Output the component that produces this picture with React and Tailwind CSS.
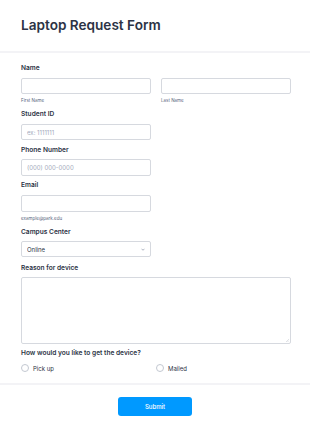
import React, { useState } from "react";

const labelCls = "block text-[6.6px] leading-[10px] font-semibold text-[#2c3345]";
const inputCls =
  "block h-[16px] rounded-[2px] border border-[#d6d9df] bg-white px-[5px] text-[6px] text-[#2c3345] placeholder:text-[#a3aabb] outline-none";
const subCls = "block text-[4.5px] leading-[7px] text-[#57647e]";

const App = () => {
  const [method, setMethod] = useState("");

  return (
    <div
      className="w-[310px] h-[432px] bg-white overflow-hidden"
      style={{ fontFamily: "Inter, 'Liberation Sans', sans-serif" }}
    >
      {/* Header */}
      <div className="pt-[16px] pb-[17px] pl-[21px]">
        <h1 className="text-[13.6px] leading-[18px] font-semibold text-[#2c3345]">
          Laptop Request Form
        </h1>
      </div>
      <div className="h-[2px] bg-[#f3f3f6]" />

      <div className="ml-[21px] w-[270px] pt-[10px]">
        {/* Name */}
        <label className={labelCls}>Name</label>
        <div className="mt-[5px] grid grid-cols-2 gap-[10px]">
          <div>
            <input className={`${inputCls} w-full`} />
            <span className={`${subCls} mt-[3px]`}>First Name</span>
          </div>
          <div>
            <input className={`${inputCls} w-full`} />
            <span className={`${subCls} mt-[3px]`}>Last Name</span>
          </div>
        </div>

        {/* Student ID */}
        <label className={`${labelCls} mt-[5px]`}>Student ID</label>
        <input className={`${inputCls} mt-[5px] w-[130px]`} placeholder="ex: 1111111" />

        {/* Phone */}
        <label className={`${labelCls} mt-[5px]`}>Phone Number</label>
        <input
          className={`${inputCls} mt-[4px] w-[130px] h-[17px]`}
          placeholder="(000) 000-0000"
        />

        {/* Email */}
        <label className={`${labelCls} mt-[4px]`}>Email</label>
        <input className={`${inputCls} mt-[5px] w-[130px] h-[17px]`} />
        <span className={`${subCls} mt-[3px]`}>example@park.edu</span>

        {/* Campus */}
        <label className={`${labelCls} mt-[5px]`}>Campus Center</label>
        <div className="relative mt-[4px] w-[130px]">
          <select
            className={`${inputCls} w-full appearance-none text-[6.5px]`}
            defaultValue="Online"
          >
            <option>Online</option>
          </select>
          <svg
            className="absolute right-[6px] top-[6.5px] w-[4px] h-[3px] pointer-events-none"
            viewBox="0 0 8 5"
            fill="none"
            stroke="#8a93a6"
            strokeWidth="1.4"
          >
            <path d="M1 1l3 3 3-3" />
          </svg>
        </div>

        {/* Reason */}
        <label className={`${labelCls} mt-[6px]`}>Reason for device</label>
        <div className="relative mt-[4px]">
          <textarea className="block h-[67px] w-full resize-none rounded-[2px] border border-[#d6d9df] outline-none" />
          <svg
            className="absolute right-[2px] bottom-[2px] w-[3px] h-[3px] pointer-events-none"
            viewBox="0 0 6 6"
            stroke="#b0b5c0"
            strokeWidth="0.8"
          >
            <path d="M6 0L0 6M6 3L3 6" />
          </svg>
        </div>

        {/* Method */}
        <label className={`${labelCls} mt-[4px]`}>
          How would you like to get the device?
        </label>
        <div className="mt-[5px] grid grid-cols-2 h-[10px]">
          {["Pick up", "Mailed"].map((opt) => (
            <label key={opt} className="flex items-center gap-[4px]">
              <span
                onClick={() => setMethod(opt)}
                className={`w-[8px] h-[8px] rounded-full border bg-white ${
                  method === opt ? "border-[#0099ff]" : "border-[#c3c8d1]"
                }`}
              />
              <span className="text-[6px] text-[#2c3345]">{opt}</span>
            </label>
          ))}
        </div>
      </div>

      <div className="mt-[10px] h-[2px] bg-[#f3f3f6]" />

      <div className="flex justify-center pt-[12px]">
        <button className="w-[74px] h-[19px] rounded-[3px] bg-[#0099ff] text-white text-[6px] font-medium">
          Submit
        </button>
      </div>
    </div>
  );
};

export default App;
